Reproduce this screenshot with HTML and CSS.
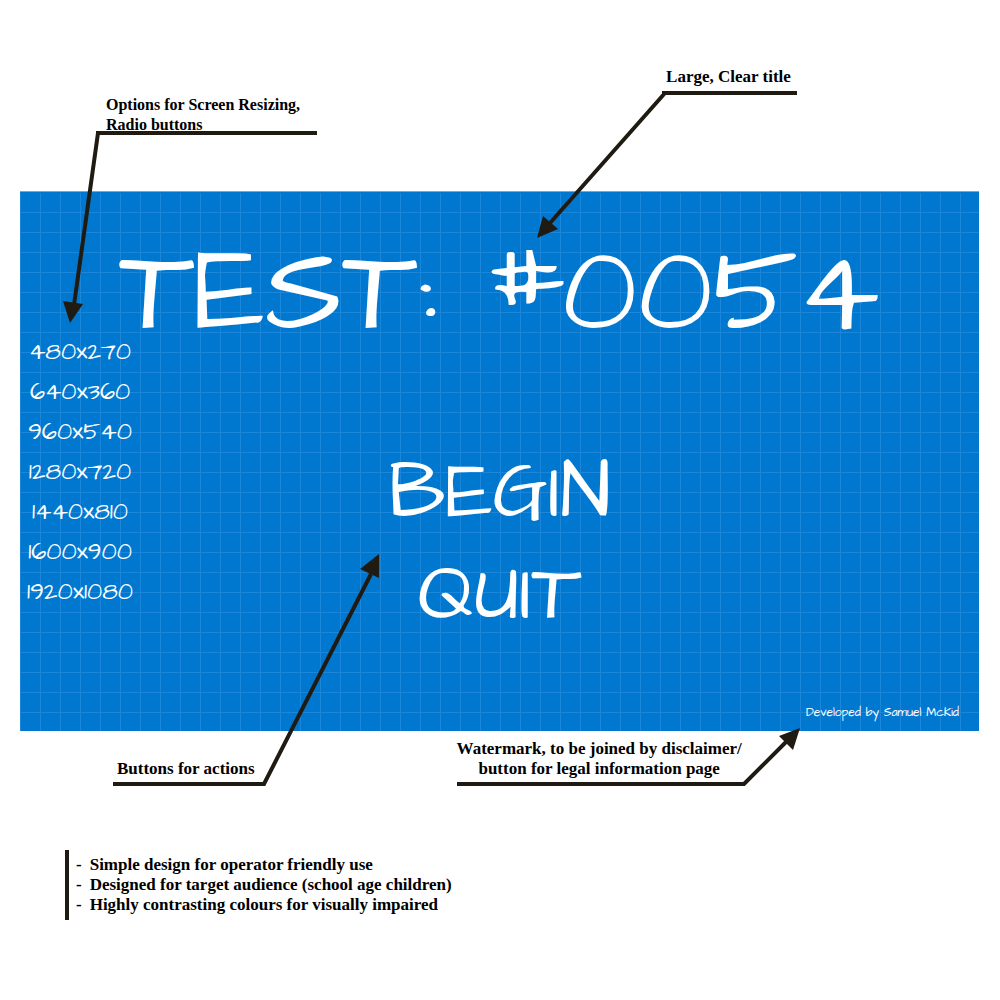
FILE: index.html
```html
<!DOCTYPE html>
<html lang="en">
<head>
<meta charset="utf-8">
<title>Menu screen design</title>
<link rel="stylesheet" href="styles.css">
</head>
<body>
<main class="board">
  <div class="notes notes-top">
    <p class="note note-options">Options for Screen Resizing,<br>Radio buttons
      <svg class="arrow arrow-options" width="260" height="200" viewBox="0 0 260 200" aria-hidden="true">
        <path class="line" d="M257 8H36M38 8L14 180"/>
        <path class="head" d="M3 176L23 179L10 198Z"/>
      </svg>
    </p>
    <p class="note note-title">Large, Clear title
      <svg class="arrow arrow-title" width="264" height="152" viewBox="0 0 264 152" aria-hidden="true">
        <path class="line" d="M261 5H126M129 5L14 135"/>
        <path class="head" d="M7 128L22 141L1 150Z"/>
      </svg>
    </p>
  </div>

  <section class="screen">
    <h1 class="title">TEST: #0054</h1>
    <div class="menu">
      <form class="sizes">
        <label class="size"><input type="radio" name="size">480x270</label>
        <label class="size"><input type="radio" name="size">640x360</label>
        <label class="size"><input type="radio" name="size">960x540</label>
        <label class="size"><input type="radio" name="size">1280x720</label>
        <label class="size"><input type="radio" name="size">1440x810</label>
        <label class="size"><input type="radio" name="size">1600x900</label>
        <label class="size"><input type="radio" name="size">1920x1080</label>
      </form>
      <div class="actions">
        <button class="action" type="button">BEGIN</button>
        <button class="action" type="button">QUIT</button>
      </div>
    </div>
    <p class="credit">Developed by Samuel McKid</p>
  </section>

  <div class="notes notes-bottom">
    <p class="note note-actions">Buttons for actions
      <svg class="arrow arrow-actions" width="270" height="236" viewBox="0 0 270 236" aria-hidden="true">
        <path class="line" d="M2 230H153L260 20"/>
        <path class="head" d="M268 0V24L249 15Z"/>
      </svg>
    </p>
    <p class="note note-legal">Watermark, to be joined by disclaimer/<br>button for legal information page
      <svg class="arrow arrow-legal" width="346" height="62" viewBox="0 0 346 62" aria-hidden="true">
        <path class="line" d="M0 57H287L334 10"/>
        <path class="head" d="M343 1L322 9L336 23Z"/>
      </svg>
    </p>
  </div>

  <ul class="summary">
    <li>Simple design for operator friendly use</li>
    <li>Designed for target audience (school age children)</li>
    <li>Highly contrasting colours for visually impaired</li>
  </ul>
</main>
</body>
</html>
```
FILE: styles.css
```css
* { box-sizing: border-box; }

body {
  margin: 0;
  background: #fff;
  color: #000;
  font: bold 17px/20px "Liberation Serif", "Times New Roman", serif;
}

p, h1, ul { margin: 0; }

.board { padding: 0 21px 80px 20px; }

.notes { display: flex; }

.note { position: relative; }

.notes-top {
  align-items: flex-start;
  padding: 67px 0 57px 86px;
}

.note-options {
  padding-top: 28px;
  font-size: 16px;
}

.note-title { margin-left: 366px; }

.arrow {
  position: absolute;
  z-index: 1;
  overflow: visible;
}

.line {
  fill: none;
  stroke: #1f1b12;
  stroke-width: 4;
}

.head { fill: #1f1b12; }

.arrow-options { left: -46px; top: 58px; }
.arrow-title { left: -130px; top: 21px; }
.arrow-actions { left: -6px; bottom: -11px; }
.arrow-legal { left: 0; bottom: -10px; }

.screen {
  display: flex;
  flex-direction: column;
  aspect-ratio: 16 / 9;
  color: #fff;
  background-color: #0078d0;
  background-image:
    linear-gradient(#0078d0, #0078d0),
    linear-gradient(#1c87da 1px, transparent 1px),
    linear-gradient(90deg, #1c87da 1px, transparent 1px);
  background-size: 100% 1px, 20px 20px, 20px 20px;
  background-repeat: no-repeat, repeat, repeat;
  box-shadow: 0 -1px #8ba3b5;
  font-family: "Architects Daughter", "DejaVu Sans", sans-serif;
  font-weight: normal;
}

.title {
  padding-top: 62px;
  font-size: 120px;
  font-weight: normal;
  line-height: 78px;
  text-align: center;
  white-space: nowrap;
}

.menu {
  display: grid;
  grid-template-columns: 120px 1fr 120px;
  flex: 1;
}

.sizes {
  display: flex;
  flex-direction: column;
}

.size {
  font-size: 24px;
  line-height: 40px;
  text-align: center;
  cursor: pointer;
}

.size input {
  position: absolute;
  appearance: none;
  margin: 0;
}

.actions {
  display: flex;
  flex-direction: column;
  align-items: center;
  padding-top: 110px;
}

.action {
  padding: 0;
  border: 0;
  background: none;
  color: inherit;
  font: inherit;
  font-size: 80px;
  line-height: 102px;
  cursor: pointer;
}

.credit {
  padding: 0 20px 8px;
  font-size: 12px;
  text-align: right;
}

.notes-bottom {
  align-items: flex-end;
  padding: 8px 0 0 97px;
}

.note-legal {
  margin-left: 202px;
  text-align: center;
}

.summary {
  margin: 71px 0 0 45px;
  padding: 5px 7px;
  border-left: 4px solid #1f1b12;
  list-style: none;
}

.summary li {
  display: flex;
  gap: 8px;
}

.summary li::before { content: "-"; }
```
